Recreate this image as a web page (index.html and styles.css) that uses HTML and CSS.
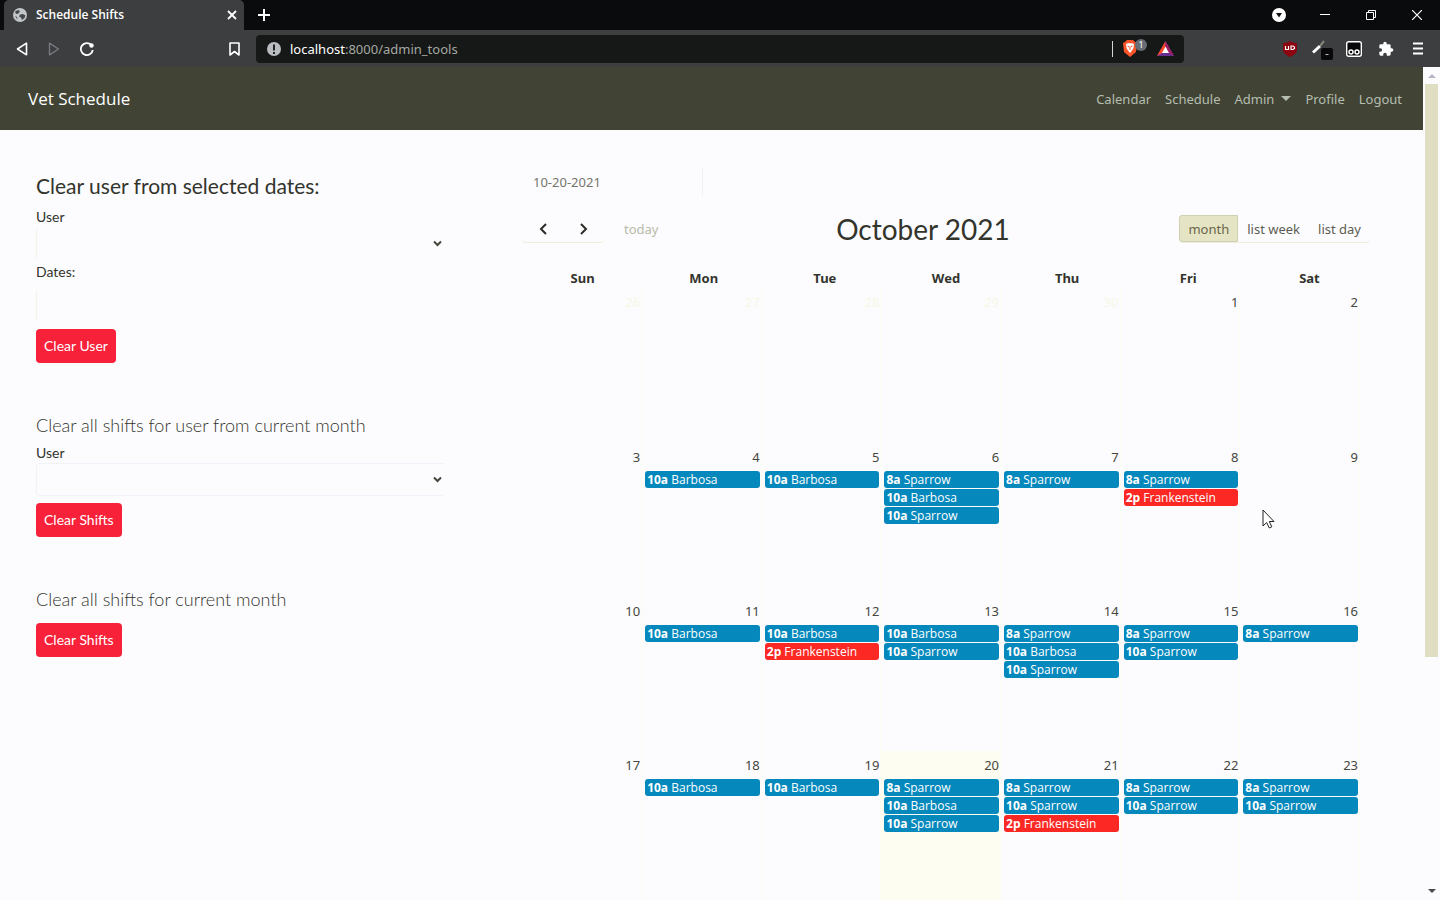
FILE: index.html
```html
<!DOCTYPE html>
<html lang="en">
<head>
<meta charset="utf-8">
<title>Schedule Shifts</title>
<link rel="stylesheet" href="styles.css">
</head>
<body>
<header class="browser">
  <div class="tabstrip">
    <div class="tab">
      <svg class="globe" width="14" height="14" viewBox="0 0 14 14"><circle cx="7" cy="7" r="7" fill="#c3c6c9"/><path d="M2 3.500l3-1.500 2 1-1.500 2.500L3 6zM7 6.500l3-.5 2.500 1.500-1 2.500-2.500 2-1-2.500L6 8.500zM2 8l2 1 .5 2.500z" fill="#44474c"/></svg>
      <span class="tab-title">Schedule Shifts</span>
      <button class="icon-btn" aria-label="Close tab"><svg width="10" height="10" viewBox="0 0 10 10"><path d="M1 1l8 8M9 1l-8 8" stroke="#fff" stroke-width="1.800"/></svg></button>
    </div>
    <button class="icon-btn new-tab" aria-label="New tab"><svg width="12" height="12" viewBox="0 0 12 12"><path d="M6 0v12M0 6h12" stroke="#fff" stroke-width="2"/></svg></button>
    <div class="window-controls">
      <button class="icon-btn" aria-label="Search tabs"><svg width="14" height="14" viewBox="0 0 14 14"><circle cx="7" cy="7" r="7" fill="#fff"/><path d="M4 5h6L7 9.500z" fill="#111"/></svg></button>
      <button class="icon-btn" aria-label="Minimize"><svg width="10" height="10" viewBox="0 0 10 10"><path d="M0 4.500h10" stroke="#fff"/></svg></button>
      <button class="icon-btn" aria-label="Restore"><svg width="10" height="10" viewBox="0 0 10 10"><path d="M.5 2.500h7v7h-7zM2.500 2.500v-2h7v7h-2" fill="none" stroke="#fff"/></svg></button>
      <button class="icon-btn" aria-label="Close"><svg width="10" height="10" viewBox="0 0 10 10"><path d="M0 0l10 10M10 0L0 10" stroke="#fff" stroke-width="1.200"/></svg></button>
    </div>
  </div>
  <div class="toolbar">
    <div class="history">
      <button class="icon-btn" aria-label="Back"><svg width="12" height="14" viewBox="0 0 12 14"><path d="M10.500 1.200v11.600L1.500 7z" fill="none" stroke="#fff" stroke-width="1.600" stroke-linejoin="round"/></svg></button>
      <button class="icon-btn" aria-label="Forward"><svg width="12" height="14" viewBox="0 0 12 14"><path d="M1.500 1.200v11.600L10.500 7z" fill="none" stroke="#777a80" stroke-width="1.400" stroke-linejoin="round"/></svg></button>
      <button class="icon-btn" aria-label="Reload"><svg width="14" height="14" viewBox="0 0 14 14"><path d="M11.300 3A6 6 0 1 0 12.800 8" fill="none" stroke="#fff" stroke-width="1.800"/><circle cx="11.500" cy="3.500" r="2.200" fill="#fff"/></svg></button>
    </div>
    <button class="icon-btn bookmark" aria-label="Bookmark"><svg width="11" height="14" viewBox="0 0 11 14"><path d="M1 1h9v12L5.500 9.500 1 13z" fill="none" stroke="#fff" stroke-width="1.600" stroke-linejoin="round"/></svg></button>
    <div class="address">
      <svg width="14" height="14" viewBox="0 0 14 14"><circle cx="7" cy="7" r="7" fill="#b9bcc0"/><path d="M7 2.500v6M7 10v2" stroke="#222" stroke-width="2"/></svg>
      <span class="url"><b>localhost</b>:8000/admin_tools</span>
      <span class="divider"></span>
      <svg class="shield" width="26" height="20" viewBox="0 0 26 20"><path d="M3 3l2-2h6l2 2 2 1-1 9-6 5-6-5L1 4z" fill="#fb542b"/><path d="M4 5l3-1 1 .5L9 4l3 1-.5 4L10 11.500 8 14l-2-2.500L4.500 9z" fill="#fff"/><path d="M5.500 7l2 .8M10.500 7l-2 .8M8 8v3" stroke="#fb542b"/><circle cx="19" cy="6" r="6" fill="#686c74"/><text x="19" y="9" font-size="9" text-anchor="middle" fill="#fff" class="badge-text">1</text></svg>
      <svg width="17" height="15" viewBox="0 0 17 15"><path d="M8.500 0L0 15h17z" fill="#662d91"/><path d="M8.500 0L0 15l8.500-5z" fill="#ff4724"/><path d="M8.500 0L17 15l-8.500-5z" fill="#9e1f63"/><path d="M8.500 5.500L12 12H5z" fill="#fff"/></svg>
    </div>
    <div class="extensions">
      <button class="icon-btn" aria-label="uBlock"><svg width="16" height="16" viewBox="0 0 16 16"><path d="M8 0c2 1.500 4 2 7 2v7c0 3-4 5.500-7 7-3-1.500-7-4-7-7V2c3 0 5-.5 7-2z" fill="#8c0410"/><path d="M3.500 5v3.500h3V5M9 5v3.500h2l1.500-1V6L11 5z" fill="none" stroke="#fff" stroke-width="1.200"/></svg></button>
      <button class="icon-btn" aria-label="Color picker"><svg class="picker" width="22" height="22" viewBox="0 0 22 22"><path d="M2 14.500l7-6.500" stroke="#fff" stroke-width="3"/><path d="M9 8l4-5" stroke="#8b8f80" stroke-width="2"/><rect x="10" y="10" width="12" height="12" rx="2" fill="#08080a"/><path d="M14.500 16.500h3" stroke="#bbb"/></svg></button>
      <button class="icon-btn" aria-label="Tampermonkey"><svg width="16" height="16" viewBox="0 0 16 16"><rect x=".7" y=".7" width="14.600" height="14.600" rx="2" fill="#08080a" stroke="#fff" stroke-width="1.400"/><g fill="#111" stroke="#fff" stroke-width="1.500"><circle cx="5" cy="11" r="2"/><circle cx="11" cy="11" r="2"/></g></svg></button>
      <button class="icon-btn" aria-label="Extensions"><svg width="16" height="16" viewBox="0 0 24 24"><path d="M20.500 11H19V7a2 2 0 0 0-2-2h-4V3.500a2.500 2.500 0 0 0-5 0V5H4a2 2 0 0 0-2 2v3.800h1.500a2.700 2.700 0 0 1 0 5.400H2V20a2 2 0 0 0 2 2h3.800v-1.500a2.700 2.700 0 0 1 5.400 0V22H17a2 2 0 0 0 2-2v-4h1.500a2.500 2.500 0 0 0 0-5z" fill="#fff"/></svg></button>
      <button class="icon-btn" aria-label="Menu"><svg width="10" height="13" viewBox="0 0 10 13"><path d="M0 1.500h10M0 6.500h10M0 11.500h10" stroke="#fff" stroke-width="2"/></svg></button>
    </div>
  </div>
</header>
<div class="viewport">
  <div class="page">
    <nav class="navbar">
      <a class="brand" href="#">Vet Schedule</a>
      <div class="links">
        <a href="#">Calendar</a><a href="#">Schedule</a><a class="dropdown" href="#">Admin</a><a href="#">Profile</a><a href="#">Logout</a>
      </div>
    </nav>
    <main class="content">
      <section class="tools">
        <form class="tool">
          <h3 class="title">Clear user from selected dates:</h3>
          <label for="user1">User</label>
          <div class="select"><select id="user1"><option></option></select><svg width="9" height="7" viewBox="0 0 9 7"><path d="M1 1.500l3.500 3.500L8 1.500" fill="none" stroke="#45463c" stroke-width="2"/></svg></div>
          <label class="dates-label" for="dates">Dates:</label>
          <input class="field" id="dates" type="text">
          <button class="danger" type="button">Clear User</button>
        </form>
        <form class="tool">
          <h4 class="subtitle">Clear all shifts for user from current month</h4>
          <label for="user2">User</label>
          <div class="select"><select class="outlined" id="user2"><option></option></select><svg width="9" height="7" viewBox="0 0 9 7"><path d="M1 1.500l3.500 3.500L8 1.500" fill="none" stroke="#45463c" stroke-width="2"/></svg></div>
          <button class="danger" type="button">Clear Shifts</button>
        </form>
        <form class="tool short">
          <h4 class="subtitle">Clear all shifts for current month</h4>
          <button class="danger" type="button">Clear Shifts</button>
        </form>
      </section>
      <section class="calendar">
        <input class="goto" type="text" value="10-20-2021" aria-label="Go to date">
        <div class="cal-bar">
          <div class="cal-side">
            <div class="group arrows">
              <button aria-label="Previous"><svg width="8" height="12" viewBox="0 0 8 12"><path d="M7 1L2 6l5 5" fill="none" stroke="#2c2d28" stroke-width="2"/></svg></button>
              <button aria-label="Next"><svg width="8" height="12" viewBox="0 0 8 12"><path d="M1 1l5 5-5 5" fill="none" stroke="#2c2d28" stroke-width="2"/></svg></button>
            </div>
            <button class="today-btn" disabled>today</button>
          </div>
          <h2>October 2021</h2>
          <div class="group views"><button class="active">month</button><button>list week</button><button>list day</button></div>
        </div>
        <table class="days-head"><thead><tr><th>Sun</th><th>Mon</th><th>Tue</th><th>Wed</th><th>Thu</th><th>Fri</th><th>Sat</th></tr></thead></table>
        <div class="scroller">
        <table class="days"><tbody>
          <tr><td class="other">26</td><td class="other">27</td><td class="other">28</td><td class="other">29</td><td class="other">30</td><td>1</td><td>2</td></tr>
          <tr>
            <td>3</td>
            <td>4<a href="#"><b>10a</b> Barbosa</a></td>
            <td>5<a href="#"><b>10a</b> Barbosa</a></td>
            <td>6<a href="#"><b>8a</b> Sparrow</a><a href="#"><b>10a</b> Barbosa</a><a href="#"><b>10a</b> Sparrow</a></td>
            <td>7<a href="#"><b>8a</b> Sparrow</a></td>
            <td>8<a href="#"><b>8a</b> Sparrow</a><a class="red" href="#"><b>2p</b> Frankenstein</a></td>
            <td>9</td>
          </tr>
          <tr>
            <td>10</td>
            <td>11<a href="#"><b>10a</b> Barbosa</a></td>
            <td>12<a href="#"><b>10a</b> Barbosa</a><a class="red" href="#"><b>2p</b> Frankenstein</a></td>
            <td>13<a href="#"><b>10a</b> Barbosa</a><a href="#"><b>10a</b> Sparrow</a></td>
            <td>14<a href="#"><b>8a</b> Sparrow</a><a href="#"><b>10a</b> Barbosa</a><a href="#"><b>10a</b> Sparrow</a></td>
            <td>15<a href="#"><b>8a</b> Sparrow</a><a href="#"><b>10a</b> Sparrow</a></td>
            <td>16<a href="#"><b>8a</b> Sparrow</a></td>
          </tr>
          <tr>
            <td>17</td>
            <td>18<a href="#"><b>10a</b> Barbosa</a></td>
            <td>19<a href="#"><b>10a</b> Barbosa</a></td>
            <td class="today">20<a href="#"><b>8a</b> Sparrow</a><a href="#"><b>10a</b> Barbosa</a><a href="#"><b>10a</b> Sparrow</a></td>
            <td>21<a href="#"><b>8a</b> Sparrow</a><a href="#"><b>10a</b> Sparrow</a><a class="red" href="#"><b>2p</b> Frankenstein</a></td>
            <td>22<a href="#"><b>8a</b> Sparrow</a><a href="#"><b>10a</b> Sparrow</a></td>
            <td>23<a href="#"><b>8a</b> Sparrow</a><a href="#"><b>10a</b> Sparrow</a></td>
          </tr>
        </tbody></table>
        </div>
      </section>
    </main>
  </div>
  <div class="scrollbar">
    <svg width="8" height="5" viewBox="0 0 8 5"><path d="M0 5l4-4 4 4z" fill="#b6b6c6"/></svg>
    <div class="thumb"></div>
    <svg width="8" height="5" viewBox="0 0 8 5"><path d="M0 0l4 4 4-4z" fill="#4a4a4a"/></svg>
  </div>
</div>
<svg class="cursor" width="13" height="20" viewBox="0 0 13 20"><path d="M1 1v16l3.700-3.500 2.600 5.500 2.500-1.200L7.300 12.500H12z" fill="#fff" stroke="#222" stroke-width="1"/></svg>
</body>
</html>
```
FILE: styles.css
```css
* { box-sizing: border-box; }
body { margin: 0; height: 100vh; display: flex; flex-direction: column; overflow: hidden; background: #fcfcff; color: #33342c; font: 14px/20px Lato, sans-serif; }
button, input, select { font: inherit; color: inherit; }
button { border: 0; background: none; padding: 0; }
a { text-decoration: none; color: inherit; }
h2, h3, h4 { margin: 0; font-weight: 400; }
svg { display: block; flex: none; }

.browser { font: 12px/16px "Open Sans", sans-serif; color: #fff; }
.icon-btn { display: grid; place-content: center; }
.tabstrip { height: 30px; display: flex; align-items: center; background: #0a0b0c; padding-left: 4px; }
.tab { width: 240px; height: 30px; display: flex; align-items: center; gap: 9px; padding: 0 7px 0 9px; background: #3c3e40; border-radius: 5px 5px 0 0; }
.tab-title { flex: 1; font-weight: 600; }
.new-tab { margin-left: 14px; }
.window-controls { margin-left: auto; display: flex; gap: 36px; padding-right: 18px; }
.window-controls .icon-btn { width: 10px; }
.toolbar { height: 37px; display: flex; align-items: center; background: #3c3e40; }
.history { display: flex; align-items: center; gap: 20px; width: 228px; padding-left: 16px; }
.bookmark { width: 12px; margin-right: 16px; }
.address { flex: 1; height: 28px; display: flex; align-items: center; gap: 9px; padding: 0 10px 0 11px; background: #161817; border-radius: 4px; font: 13px/18px "Noto Sans", sans-serif; }
.url { color: #a5a8a2; flex: 1; }
.url b { color: #fff; font-weight: 400; }
.divider { width: 1px; height: 16px; background: #d5d5d5; }
.badge-text { font-family: "Noto Sans", sans-serif; }
.extensions { width: 256px; display: flex; align-items: center; justify-content: flex-end; gap: 16px; padding-right: 14px; }
.extensions .icon-btn { width: 16px; }

.viewport { flex: 1; min-height: 0; display: flex; }
.page { flex: 1; min-width: 0; overflow: hidden; }
.scrollbar { width: 17px; display: flex; flex-direction: column; align-items: center; padding: 6px 0; gap: 6px; }
.thumb { width: 13px; height: 573px; margin-bottom: auto; background: #dfdec2; }

.navbar { height: 63px; display: flex; align-items: center; justify-content: space-between; padding: 0 21px 0 28px; background: #414434; color: #fff; font: 13px/20px "Noto Sans", sans-serif; }
.brand { font: 17px/24px "Open Sans", sans-serif; }
.links { display: flex; gap: 14px; color: #b4bdb0; }
.dropdown { display: flex; align-items: center; gap: 7px; }
.dropdown::after { content: ""; border: 5px solid transparent; border-top-color: currentColor; border-bottom: 0; }

.content { display: grid; grid-template-columns: 410fr 848fr; gap: 76px; padding: 38px 53px 0 36px; }
.tools { display: flex; flex-direction: column; gap: 48px; padding-top: 4px; }
.tool { display: flex; flex-direction: column; align-items: flex-start; }
.title { font-size: 21px; line-height: 28px; margin-bottom: 7px; }
.subtitle { font-size: 18px; font-weight: 300; line-height: 28px; margin-bottom: 4px; }
.short .subtitle { margin-bottom: 10px; }
.tool label { font-size: 14px; line-height: 20px; }
.select { position: relative; width: 100%; margin-bottom: 7px; }
.select svg { position: absolute; right: 4px; top: 13px; }
.select select, .field { appearance: none; display: block; width: 100%; height: 33px; padding: 0 12px; border: 1px solid transparent; border-left-color: #f3f3ea; border-radius: 4px; background: transparent; }
.select select.outlined { border-color: #f0f2fa; border-right-color: transparent; }
.field { margin-bottom: 7px; }
.dates-label { margin-top: -5px; margin-bottom: 7px; }
.danger { height: 34px; padding: 0 8px; border-radius: 4px; background: #f8213a; color: #fff; font-size: 14px; }

.goto { display: block; width: 181px; height: 28px; padding: 0 11px; border: 0; border-right: 1px solid #eef1f8; background: transparent; color: #75766a; font-size: 13px; }
.calendar { font-family: "Noto Sans", sans-serif; font-size: 13px; }
.cal-bar { display: flex; justify-content: space-between; align-items: center; margin-top: 13px; height: 40px; }
.cal-bar h2 { font: 28px/36px Lato, sans-serif; }
.cal-side { display: flex; align-items: center; gap: 12px; }
.group { display: flex; height: 28px; border-bottom: 1px solid #eeeeda; border-radius: 4px; }
.arrows button { width: 41px; display: grid; place-content: center; }
.today-btn { padding: 0 8px; color: #b9baa8; }
.views button { padding: 0 9px; color: #5c5d50; }
.views .active { padding: 0 8px; background: #e5e4c4; border: 1px solid #cfcfb4; border-radius: 3px 0 0 3px; color: #6b664c; }

table { width: 100%; table-layout: fixed; border-collapse: collapse; }
.days-head { margin-top: 19px; }
.days-head th { padding: 0; line-height: 20px; }
.scroller { padding-right: 10px; }
.days td { height: 154px; padding: 4px 1px 0 3px; vertical-align: top; text-align: right; border-right: 1px solid #fcfcf2; color: #45463c; }
.days tr:first-child td { height: 155px; }
.days td.other { color: #f7f7e4; }
.days .today { background: #fdfdf2; }
.days td a { display: block; height: 17px; margin-bottom: 1px; padding: 0 2px; border-radius: 3px; background: #0588bc; color: #fff; text-align: left; font: 12px/17px "Open Sans", sans-serif; white-space: nowrap; }
.days td a:first-of-type { margin-top: 4px; }
.days td a.red { background: #fb2824; }
.cursor { position: absolute; left: 1262px; top: 509px; }
```
